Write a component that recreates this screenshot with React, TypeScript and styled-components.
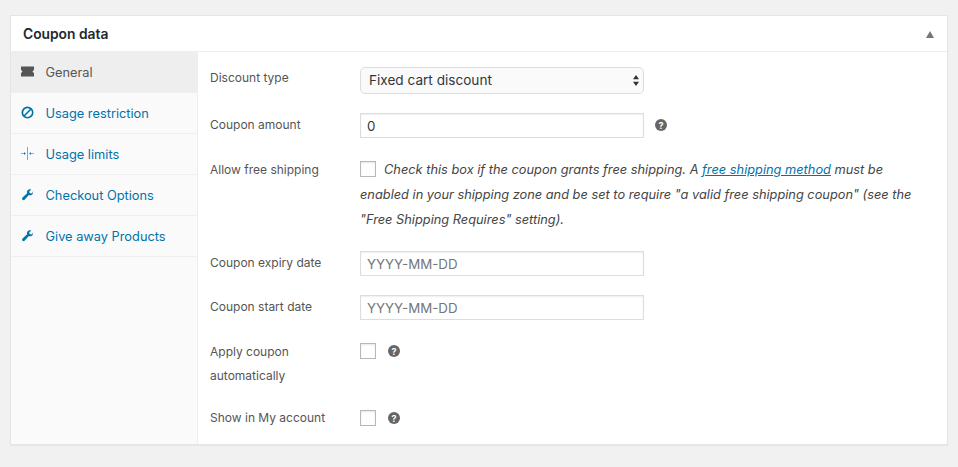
import { ReactElement, ReactNode } from "react"

import styled, { createGlobalStyle } from "styled-components"

const GlobalStyle = createGlobalStyle`
  html, body {
    margin: 0;
    padding: 0;
    background: #f1f1f1;
    font-family: Inter, "Liberation Sans", sans-serif;
    color: #444;
  }
  * {
    box-sizing: border-box;
  }
`

const Page = styled.div`
  width: 958px;
  height: 467px;
  padding: 15px 10px 22px;
  overflow: hidden;
`

const Panel = styled.div`
  display: flex;
  flex-direction: column;
  height: 430px;
  background: #fff;
  border: 1px solid #e5e5e5;
  box-shadow: 0 1px 1px rgba(0, 0, 0, 0.04);
`

const PanelHeader = styled.div`
  display: flex;
  align-items: center;
  justify-content: space-between;
  height: 36px;
  flex: none;
  padding: 1px 13px 0 12px;
  border-bottom: 1px solid #eee;
`

const PanelTitle = styled.h2`
  margin: 0;
  font-size: 13.8px;
  font-weight: 600;
  color: #23282d;
`

const Toggle = styled.span`
  width: 0;
  height: 0;
  border-left: 4px solid transparent;
  border-right: 4px solid transparent;
  border-bottom: 7px solid #72777c;
`

const PanelBody = styled.div`
  display: flex;
  flex: 1;
  min-height: 0;
`

const Sidebar = styled.ul`
  width: 187px;
  flex: none;
  margin: 0;
  padding: 0;
  list-style: none;
  background: #fafafa;
  border-right: 1px solid #eee;
`

const Tab = styled.li<{ $active?: boolean }>`
  display: flex;
  align-items: center;
  gap: 11.5px;
  height: 41px;
  padding: 1px 0 0 10px;
  font-size: 12.8px;
  background: ${(p) => (p.$active ? "#eee" : "transparent")};
  color: ${(p) => (p.$active ? "#555" : "#0073aa")};
  border-bottom: 1px solid #eee;
`

const TabIcon = styled.svg`
  width: 13px;
  height: 13px;
  flex: none;
  margin-top: -2px;
  fill: currentColor;
`

const Form = styled.div`
  flex: 1;
  padding: 15px 12px 0;
  font-size: 12px;
`

const Row = styled.div<{ $height: number }>`
  display: grid;
  grid-template-columns: 150px 1fr;
  height: ${(p) => p.$height}px;
`

const Label = styled.label<{ $shift?: number }>`
  margin-top: ${(p) => p.$shift ?? 0}px;
  line-height: 24px;
  color: #555;
`

const Field = styled.div`
  display: flex;
  align-items: flex-start;
  gap: 12px;
`

const Select = styled.div`
  display: flex;
  align-items: center;
  justify-content: space-between;
  width: 284px;
  height: 27px;
  padding: 0 3px 1px 8px;
  font-size: 13.6px;
  color: #32373c;
  background: #fafafa;
  border: 1px solid #ddd;
  border-radius: 5px;
`

const Stepper = styled.svg`
  width: 8px;
  height: 13px;
  fill: #333;
`

const TextInput = styled.div<{ $placeholder?: boolean }>`
  display: flex;
  align-items: center;
  width: 284px;
  height: 25px;
  padding: 0 6px;
  font-size: 13.3px;
  color: ${(p) => (p.$placeholder ? "#72777c" : "#32373c")};
  background: #fff;
  border: 1px solid #ddd;
  box-shadow: inset 0 1px 2px rgba(0, 0, 0, 0.07);
`

const Checkbox = styled.span`
  width: 16px;
  height: 16px;
  flex: none;
  background: #fff;
  border: 1px solid #b4b9be;
  box-shadow: inset 0 1px 2px rgba(0, 0, 0, 0.1);
`

const InlineCheckbox = styled(Checkbox)`
  display: inline-block;
  margin-right: 8px;
  vertical-align: -3px;
`

const HelpBadge = styled.span<{ $top: number; $left?: number }>`
  display: flex;
  align-items: center;
  justify-content: center;
  width: 12px;
  height: 12px;
  flex: none;
  margin-top: ${(p) => p.$top}px;
  margin-left: ${(p) => p.$left ?? 0}px;
  border-radius: 50%;
  background: #666;
  color: #fff;
  font-size: 9px;
  font-weight: 700;
  line-height: 1;
`

const Description = styled.p`
  width: 565px;
  margin: -4px 0 0;
  font-size: 12.8px;
  font-style: italic;
  line-height: 25px;
  color: #444;
`

const DescriptionLink = styled.a`
  color: #0073aa;
  text-decoration: underline;
`

function TicketIcon(): ReactElement {
  return (
    <TabIcon viewBox="0 0 14 14">
      <path d="M0 1.500h14v3.700L12.400 7 14 8.800v3.700H0V8.800L1.600 7 0 5.200z" />
    </TabIcon>
  )
}

function BlockedIcon(): ReactElement {
  return (
    <TabIcon viewBox="0 0 14 14">
      <path d="M7 .5a6.500 6.500 0 1 0 0 13 6.500 6.500 0 0 0 0-13zM2.400 7a4.600 4.600 0 0 1 7.200-3.800L3.200 9.600A4.600 4.600 0 0 1 2.400 7zm2 3.800 6.400-6.400a4.600 4.600 0 0 1-6.400 6.400z" />
    </TabIcon>
  )
}

function LimitsIcon(): ReactElement {
  return (
    <TabIcon viewBox="0 0 14 14">
      <path d="M6.700 0h.6v14h-.6zM0 6.750h3.400V5.500L5.200 7 3.400 8.500V7.250H0zM14 6.750h-3.400V5.500L8.800 7l1.800 1.500V7.250H14z" />
    </TabIcon>
  )
}

function WrenchIcon(): ReactElement {
  return (
    <TabIcon viewBox="-1 -1 15 15">
      <path d="M13.400 3.200 11 5.400 9 4.900l-.5-1.800L10.800.8C9.200.1 7.600.5 6.700 1.500 5.800 2.500 5.600 3.900 6.100 5.100L.8 10.100c-.7.700-.7 1.700-.1 2.400.7.700 1.700.700 2.400 0l5-5.300c1.200.5 2.700.3 3.700-.7 1-1 1.400-2.600.6-3.300z" />
    </TabIcon>
  )
}

const tabs: { label: string; icon: ReactNode; active?: boolean }[] = [
  { label: "General", icon: <TicketIcon />, active: true },
  { label: "Usage restriction", icon: <BlockedIcon /> },
  { label: "Usage limits", icon: <LimitsIcon /> },
  { label: "Checkout Options", icon: <WrenchIcon /> },
  { label: "Give away Products", icon: <WrenchIcon /> },
]

function App(): ReactElement {
  return (
    <Page>
      <GlobalStyle />
      <Panel>
        <PanelHeader>
          <PanelTitle>Coupon data</PanelTitle>
          <Toggle />
        </PanelHeader>
        <PanelBody>
          <Sidebar>
            {tabs.map((tab) => (
              <Tab key={tab.label} $active={tab.active}>
                {tab.icon}
                {tab.label}
              </Tab>
            ))}
          </Sidebar>
          <Form>
            <Row $height={46}>
              <Label $shift={-1}>Discount type</Label>
              <Field>
                <Select>
                  Fixed cart discount
                  <Stepper viewBox="0 0 8 13">
                    <path d="M4 1l3 4.200H1zM4 12 1 7.800h6z" />
                  </Stepper>
                </Select>
              </Field>
            </Row>
            <Row $height={48}>
              <Label>Coupon amount</Label>
              <Field>
                <TextInput>0</TextInput>
                <HelpBadge $top={6} $left={-1}>
                  ?
                </HelpBadge>
              </Field>
            </Row>
            <Row $height={90}>
              <Label $shift={-3}>Allow free shipping</Label>
              <Description>
                <InlineCheckbox />
                Check this box if the coupon grants free shipping. A{" "}
                <DescriptionLink>free shipping method</DescriptionLink> must be
                enabled in your shipping zone and be set to require "a valid
                free shipping coupon" (see the "Free Shipping Requires"
                setting).
              </Description>
            </Row>
            <Row $height={44}>
              <Label>Coupon expiry date</Label>
              <Field>
                <TextInput $placeholder>YYYY-MM-DD</TextInput>
              </Field>
            </Row>
            <Row $height={48}>
              <Label>Coupon start date</Label>
              <Field>
                <TextInput $placeholder>YYYY-MM-DD</TextInput>
              </Field>
            </Row>
            <Row $height={67}>
              <Label $shift={-3}>
                Apply coupon
                <br />
                automatically
              </Label>
              <Field>
                <Checkbox />
                <HelpBadge $top={2}>?</HelpBadge>
              </Field>
            </Row>
            <Row $height={40}>
              <Label $shift={-4}>Show in My account</Label>
              <Field>
                <Checkbox />
                <HelpBadge $top={2}>?</HelpBadge>
              </Field>
            </Row>
          </Form>
        </PanelBody>
      </Panel>
    </Page>
  )
}

export default App
